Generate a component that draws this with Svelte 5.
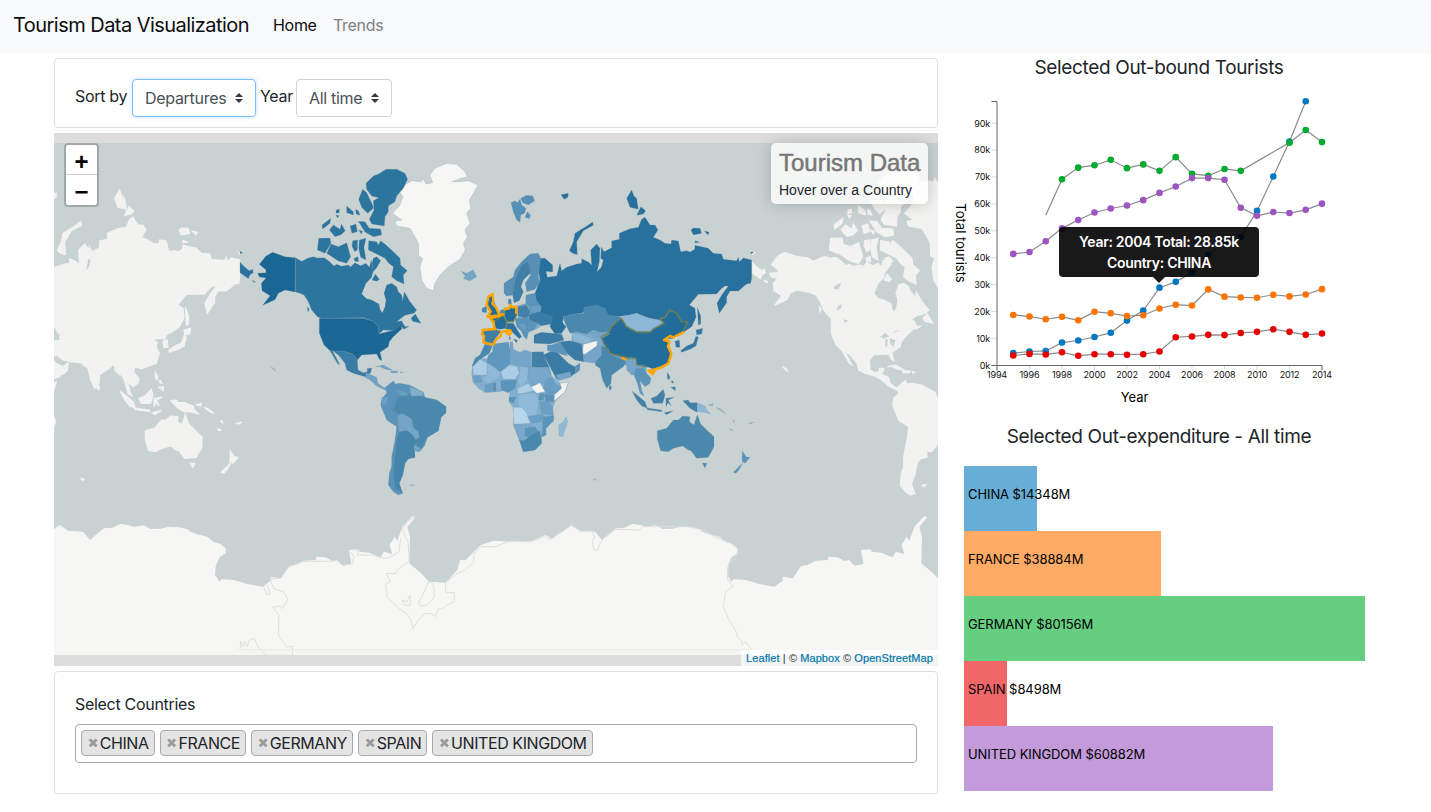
<script>
  const regions = [
    { at: [230, 150], shapes: [
      ['#f6f6f4', 'M600,75 615,55 650,40 680,43 705,65 712,80 690,86 665,95 692,95 715,92 744,105 730,130 718,150 722,175 710,190 720,220 705,240 712,262 700,280 706,300 690,328 655,350 630,375 615,400 610,422 590,415 575,390 570,350 578,325 566,318 565,280 552,255 540,235 500,228 495,214 515,210 488,190 510,165 518,140 505,118 525,105 545,92 575,95 578,85 588,102 608,98Z'],
      ['#1a6795', 'M196,323 165,320 128,307 108,318 88,343 108,360 108,368 83,370 88,381 108,384 94,400 96,422 120,437 98,466 135,449 145,430 165,420 195,426Z'],
      ['#2c739f', 'M30,337 45,352 58,362 68,358 70,368 60,374 55,386 40,375 30,368ZM28,303 38,307 32,312ZM66,390 78,397 70,396Z'],
      ['#2c759f', 'M196,323 215,334 235,324 250,320 262,324 283,323 300,336 312,348 320,343 335,349 355,345 362,350 375,338 392,347 408,340 418,352 424,330 430,362 425,382 408,400 395,432 410,446 425,450 447,462 450,478 457,489 465,470 468,450 462,430 470,405 485,400 500,410 505,425 515,435 518,452 523,425 540,455 560,480 552,490 525,496 500,515 515,512 525,530 538,528 522,538 512,528 495,542 460,540 447,552 445,530 430,514 400,503 275,505 262,500 245,480 235,455 222,435 205,428 196,426Z'],
      ['#2c759f', 'M446,72 468,58 500,58 525,70 533,88 520,115 500,138 495,155 475,168 475,185 465,200 463,228 425,222 418,208 432,180 430,152 446,143 425,138 410,118 408,100 430,78ZM398,118 410,128 428,165 430,175 413,190 395,172 386,148ZM385,214 405,215 418,235 452,237 455,255 430,260 405,246ZM350,168 370,185 370,195 350,188ZM377,178 385,182 390,196 378,192ZM318,180 328,178 328,188 318,190ZM318,195 328,197 322,204ZM276,225 302,205 300,220 278,237ZM298,240 310,225 330,238 334,222 346,242 332,255 315,260ZM360,228 378,222 382,245 366,250ZM386,240 398,244 394,252Z'],
      ['#2c759f', 'M266,265 300,264 303,280 285,310 262,300ZM303,282 325,290 350,278 362,320 350,340 325,333 290,310ZM368,272 383,270 382,300 374,305 366,288ZM388,270 408,265 402,292 408,330 392,322 386,295ZM416,272 440,275 445,285 452,272 468,285 490,305 510,325 512,345 532,362 520,375 522,402 500,392 485,380 490,350 476,340 465,325 440,312 415,300ZM430,325 440,320 452,332 442,350 430,365 426,340ZM426,390 436,372 448,388 440,394ZM372,325 384,320 386,335 374,334ZM543,505 556,492 573,520 548,514ZM232,470 238,478 234,486Z'],
      ['#1b6896', 'M268,505 400,505 430,514 445,530 447,552 460,548 495,540 512,524 516,536 490,560 478,575 475,590 450,607 456,632 448,628 440,612 395,615 382,630 368,612 345,605 300,602 282,585 268,550Z'],
      ['#3a7ca6', 'M308,602 345,605 368,612 382,630 384,660 400,668 412,665 412,655 426,655 422,668 405,680 370,670 350,660 345,640 325,615ZM300,602 308,603 330,645 322,640Z'],
      ['#6fa2c7', 'M408,668 440,682 443,700 460,712 480,713 468,722 440,708 420,690 405,682ZM436,650 460,645 487,660 470,659 450,650ZM483,662 505,664 500,669 482,668ZM512,665 520,667 512,669Z'],
      ['#b5bdbe', 'M122,650 133,656 136,663 128,657Z']
    ] },
    { at: [370, 360], shapes: [
      ['#5a93b9', 'M48,80 70,62 76,72 88,70 118,75 160,97 165,112 200,120 228,140 228,158 213,172 205,212 172,232 165,255 150,274 133,270 135,292 115,296 105,310 98,345 85,375 98,400 85,405 70,395 55,375 58,340 65,320 65,290 75,240 80,200 50,180 32,135 36,115 50,100Z'],
      ['#4a88ae', 'M80,115 100,108 115,100 125,110 150,106 165,115 200,120 228,140 228,158 213,172 205,212 172,232 155,265 133,250 148,235 145,212 130,205 128,180 110,165 85,160 65,150 75,140Z'],
      ['#4585ac', 'M88,215 110,212 130,225 148,238 132,255 135,292 115,296 105,310 98,345 88,370 98,400 75,385 70,340 75,290 80,240Z'],
      ['#74a5c9', 'M82,170 95,160 105,165 125,178 130,203 145,215 148,230 138,240 128,225 110,210 88,215ZM132,255 150,264 146,276 132,272Z'],
      ['#82afd0', 'M118,80 130,84 160,97 160,107 125,108Z'],
      ['#6a9fc5', 'M36,112 55,113 50,130 40,138 35,132ZM80,90 90,105 110,108 115,100Z'],
      ['#b9c3c2', 'M118,376 132,373 128,379Z']
    ] },
    { at: [460, 180], shapes: [
      ['#7ba9ca', 'M340,440 345,410 440,400 500,420 640,460 612,480 605,550 560,560 553,600 520,570 480,545 410,535 372,540 360,495 335,482ZM170,378 235,360 270,420 228,448 205,452 178,440Z'],
      ['#74a5c9', 'M3,274 20,280 40,270 50,290 30,302 10,296 16,288Z'],
      ['#28709d', 'M232,235 255,235 278,255 278,276 258,274 262,292 290,288 300,250 305,272 320,262 350,252 365,250 365,236 385,246 395,255 392,210 410,192 420,205 418,245 411,275 424,262 430,240 422,235 424,200 432,215 455,203 455,183 478,178 478,160 510,146 535,142 545,118 555,112 570,135 585,135 594,150 580,172 600,180 615,190 633,192 635,180 655,183 662,215 680,212 690,216 704,208 705,196 745,205 760,220 785,222 790,238 830,242 835,232 838,245 850,234 875,240 875,295 872,310 860,312 835,333 810,333 800,350 800,368 778,400 771,370 785,345 805,318 795,318 785,325 770,342 715,343 688,375 705,385 708,412 695,440 670,457 660,460 640,420 600,425 560,412 530,400 510,405 485,408 440,412 435,390 410,378 380,388 365,400 345,402 310,410 308,428 318,440 305,460 285,462 270,440 275,415 240,400 232,380 225,340 240,300 235,270Z'],
      ['#28709d', 'M328,212 340,185 345,160 380,138 398,126 400,136 370,152 350,185 352,224 338,220ZM500,55 515,30 522,48 530,55 535,88 510,82ZM530,106 543,80 557,93 550,102ZM693,150 700,144 720,145 725,160 700,165ZM733,153 748,157 744,165ZM706,182 720,187 704,188ZM712,382 722,408 722,432 715,435ZM303,44 325,40 324,52 312,58ZM872,215 882,216 874,221Z'],
      ['#5790b7', 'M153,68 165,62 172,68 180,58 185,75 198,85 194,100 182,105 180,127 170,120 160,95ZM182,55 200,46 218,48 224,62 205,75 188,68ZM202,95 212,106 208,116 195,112Z'],
      ['#5790b7', 'M132,310 160,290 165,270 185,245 210,222 235,220 242,235 235,290 240,305 225,328 200,335 196,310 212,285 205,270 158,345 140,348 132,340Z'],
      ['#3f7ea6', 'M185,255 205,245 212,278 190,300 183,320 190,335 178,362 162,368 158,345 165,300Z'],
      ['#4a88ae', 'M66,385 80,378 80,398 66,396ZM145,358 153,357 155,374 145,372ZM122,390 133,388 132,403 120,400Z'],
      ['#5a94ba', 'M198,345 225,340 229,360 245,382 230,402 205,398 208,378 197,370ZM165,415 205,415 232,430 222,450 206,456 200,478 192,470 183,452 170,440Z'],
      ['#4580a8', 'M172,380 200,375 210,400 200,415 175,408Z'],
      ['#6a9fc5', 'M175,432 195,430 200,448 186,446ZM212,378 240,375 244,392 230,402 208,392Z'],
      ['#3a7ca6', 'M205,405 235,395 278,410 272,432 245,437 232,430 210,420ZM222,465 245,457 305,463 312,480 270,492 222,490Z'],
      ['#2c739f', 'M140,430 160,430 185,470 178,476 150,450 138,446ZM160,478 172,480 170,488ZM148,465 152,476 148,480Z'],
      ['#4a88ae', 'M308,410 345,402 370,400 372,382 410,375 435,385 445,405 483,410 475,425 455,440 440,462 400,450 380,462 350,455 330,460 318,435Z'],
      ['#8db7d6', 'M485,410 510,405 530,400 555,412 600,420 612,430 580,445 570,455 530,455 500,440Z'],
      ['#216c98', 'M483,415 500,440 530,455 570,455 585,445 612,430 600,415 615,412 630,390 650,400 665,425 683,425 670,455 640,475 612,478 628,488 624,500 634,520 625,550 580,567 560,560 545,555 530,555 528,535 500,533 470,528 450,520 430,490 422,470 445,460 455,440Z'],
      ['#216c98', 'M85,350 98,342 100,360 108,380 118,405 82,410 92,395 80,375ZM135,385 165,380 170,405 160,425 140,425 133,405ZM92,415 128,403 140,425 138,445 120,448 105,445 103,425Z'],
      ['#3f7ea6', 'M68,452 105,450 122,455 105,478 100,493 75,492 70,478Z']
    ] },
    { at: [460, 320], shapes: [
      ['#82aed0', 'M38,135 65,115 150,125 215,142 268,142 275,168 300,190 325,187 315,215 285,245 278,265 282,300 258,325 258,345 245,350 245,370 225,390 190,395 178,360 160,315 163,280 158,260 147,245 150,215 135,210 120,215 75,217 55,205 38,185 35,160Z'],
      ['#4a88ae', 'M75,72 97,78 88,100 65,115 45,138 36,138 45,115 60,105Z'],
      ['#5f98bf', 'M100,72 145,66 152,100 150,130 122,155 80,125 85,105 97,95Z'],
      ['#74a5c9', 'M150,66 158,66 160,88 180,97 195,90 215,97 215,142 195,140 150,130Z'],
      ['#4180a8', 'M216,96 250,95 254,112 268,142 216,142Z'],
      ['#abcde6', 'M38,140 60,118 82,130 82,165 40,165ZM122,155 150,135 172,140 178,160 165,178 130,178ZM172,205 205,190 222,212 190,220 172,222Z'],
      ['#8fb9d8', 'M82,128 122,157 118,175 85,190 65,180 82,165ZM180,140 205,142 203,180 185,200 172,188 178,165ZM178,222 225,218 238,240 230,285 200,290 175,262 172,240ZM318,290 323,305 308,350 297,347 296,315 310,305Z'],
      ['#78a8cc', 'M207,143 268,143 272,165 255,190 225,195 210,190 203,175ZM162,315 215,315 195,340 190,362 178,360Z'],
      ['#5a94ba', 'M123,182 170,180 165,205 145,218 123,210ZM240,220 252,223 250,240 235,240ZM252,222 283,225 280,247 258,242ZM98,190 108,188 108,214 100,214ZM250,290 282,287 280,303 258,325 258,345 245,350 248,310ZM195,325 225,320 235,335 215,350 195,350ZM147,232 168,232 160,250 148,245Z'],
      ['#6a9fc5', 'M74,195 97,190 97,216 75,217ZM258,178 275,172 288,195 305,200 290,222 260,222 250,205ZM238,245 262,242 278,262 278,285 245,280ZM205,290 250,283 245,305 215,310ZM38,168 60,168 68,185 45,190Z'],
      ['#b8d6ea', 'M160,262 185,262 200,280 210,310 162,313Z'],
      ['#4a88ae', 'M178,360 190,362 215,345 240,332 245,370 225,390 190,395Z'],
      ['#f2f2f0', 'M213,202 240,188 255,215 230,220ZM300,190 325,187 315,215 283,243 283,225 305,205ZM370,72 412,62 410,80 375,105 368,98ZM640,52 655,42 650,60Z'],
      ['#3a7ca6', 'M250,105 270,95 290,95 325,130 345,140 360,130 358,150 330,172 290,178 275,150 262,125ZM300,65 330,62 365,72 368,100 372,125 345,120 320,100 308,82Z'],
      ['#5a94ba', 'M275,75 300,65 312,85 322,108 290,98 262,92 262,75ZM345,140 360,130 358,152 345,162Z'],
      ['#74a5c9', 'M288,165 330,155 335,170 295,182ZM372,105 410,78 428,85 425,105 408,130 372,125ZM500,120 515,110 525,140 530,165 515,165 500,150ZM392,40 440,35 450,42 425,55 400,50ZM445,98 480,112 478,119 450,108Z'],
      ['#8db7d6', 'M335,40 360,42 395,55 390,68 370,72 340,62Z'],
      ['#4a88ae', 'M425,78 445,85 450,103 485,118 497,110 497,130 490,140 455,165 453,190 440,205 428,180 420,145 405,135 408,125 425,105ZM448,195 455,200 453,210 447,207Z'],
      ['#5a94ba', 'M528,145 550,145 560,160 573,175 570,190 555,200 540,182 545,212 552,228 540,220 532,190 522,165Z'],
      ['#3378a3', 'M645,64 658,60 660,82 648,82ZM662,92 680,78 700,70 708,48 715,52 708,78 690,88 665,97ZM708,30 728,25 725,42 710,45ZM714,0 720,0 718,14Z'],
      ['#4380a8', 'M516,213 535,228 555,245 562,265 545,258 530,240ZM560,264 605,270 605,275 562,269ZM573,235 590,228 610,208 615,225 608,250 580,250ZM618,235 642,232 625,241 634,258 624,248 618,260ZM668,242 685,240 690,248 711,248 711,277 690,265ZM622,157 630,170 628,180 622,175ZM636,180 642,190 634,188ZM632,202 646,200 646,212ZM612,278 640,272 620,284Z'],
      ['#8db7d6', 'M711,248 735,258 740,270 752,282 725,275 711,275ZM745,255 760,250 758,258Z'],
      ['#a9b9be', 'M768,262 780,266 798,280 785,275ZM820,300 824,308 820,306ZM866,310 882,306 872,312ZM808,326 820,331 812,331ZM400,476 408,478 404,482Z'],
      ['#4a88ae', 'M592,332 620,325 640,300 655,300 668,288 690,290 688,305 702,315 712,284 722,312 740,330 762,350 762,380 745,412 710,415 693,392 685,390 668,378 640,385 625,395 602,392 592,358ZM727,429 741,430 735,443Z'],
      ['#5a94ba', 'M847,393 858,410 870,412 855,430 846,424ZM848,428 840,445 828,460 820,457Z']
    ] }
  ];

  const copies = [-512, 512, 0];

  const shelf = [
    [108,120],[125,105],[150,85],[175,83],[200,72],[222,75],[240,80],[270,76],[290,87],[320,86],[345,80],[375,82],[400,88],[412,97],[430,103],[460,110],[480,127],[500,132],[515,145],[515,160],[497,172],[490,185],[485,200],[483,225],[497,245],[503,238],[540,240],[580,252],[625,260],[650,242],[650,230],[680,235],[705,198],[725,195],[750,182],[785,180],[787,170],[815,172],[835,183],[850,180],[865,197],[892,192],[885,150],[915,148],[917,155],[945,158],[980,172],[990,155],[1015,162],[1007,135],[1022,110],[1030,122],[1045,80],[1075,48],[1083,53],[1060,80],[1068,110],[1066,190],[1100,218],[1125,245],[1175,248],[1210,210],[1218,180],[1235,180],[1280,135],[1320,122],[1370,125],[1430,124],[1475,105],[1493,117],[1530,92],[1553,75],[1578,92],[1623,95]
  ];
  const antarctica = 'M' + [-1536, 0, 1536]
    .flatMap((dx) => shelf.map(([x, y]) => `${x + dx},${y}`))
    .join(' ') + ' 3170,465 -1500,465Z';

  const x = (year) => 997 + (year - 1994) * 16.25;
  const y = (k) => 365.2 - k * 2.688;
  const from = (start, list) => list.map((v, i) => [start + i, v]);
  const series = [
    { color: '#0078c1', pts: from(1995, [4.5,5.1,5.3,8.4,9.2,10.5,12.1,16.6,20.3,28.85,31,34.5,41,45.8,47.7,57.4,70.2,83.2,98.2]) },
    { color: '#ff7400', pts: from(1995, [18.7,18.1,17.1,18,16.7,19.9,19.3,18.3,18.6,21.1,22.5,22.2,28.2,25.5,25.2,25.1,26.2,25.6,26.3,28.3]) },
    { color: '#00ab2e', lead: [1997, 55.8], pts: [...from(1998, [69.2,73.5,74.4,76.4,73.3,74.7,72.3,77.4,71.2,70.5,73,72.3]), ...from(2012, [82.8,87.5,83])] },
    { color: '#e80000', pts: from(1995, [3.6,4.2,4,4.8,3.5,4.1,4.1,3.9,4.1,5.1,10.4,10.7,11.3,11.2,12,12.4,13.4,12.4,11.3,11.8]) },
    { color: '#9e54c2', pts: from(1995, [41.4,42.1,46.1,50.9,54,56.8,58.3,59.4,61.4,64.1,66.5,69.6,69.6,69,58.6,55.6,57,56.6,57.8,60.1]) }
  ];
  const line = (s) => (s.lead ? [s.lead, ...s.pts] : s.pts).map(([a, b]) => `${x(a)},${y(b)}`).join(' ');
  const yTicks = [0, 10, 20, 30, 40, 50, 60, 70, 80, 90];
  const xTicks = Array.from({ length: 11 }, (_, i) => 1994 + i * 2);

  const spending = [
    { name: 'CHINA', total: 14348, color: '#66aed6' },
    { name: 'FRANCE', total: 38884, color: '#ffab66' },
    { name: 'GERMANY', total: 80156, color: '#66ce81' },
    { name: 'SPAIN', total: 8498, color: '#f16767' },
    { name: 'UNITED KINGDOM', total: 60882, color: '#c39ada' }
  ];
</script>

<nav>
  <span class="brand">Tourism Data Visualization</span>
  <span class="link active">Home</span>
  <span class="link">Trends</span>
</nav>

<main>
  <section class="left">
    <div class="card filters">
      <span class="lbl sort">Sort by</span>
      <div class="select focus"><span class="dep">Departures</span>
        <svg width="8" height="10" viewBox="0 0 4 5"><path fill="#343a40" d="M2 0 0 2h4zm0 5L0 3h4z" /></svg>
      </div>
      <span class="lbl year">Year</span>
      <div class="select"><span class="all">All time</span>
        <svg width="8" height="10" viewBox="0 0 4 5"><path fill="#343a40" d="M2 0 0 2h4zm0 5L0 3h4z" /></svg>
      </div>
    </div>

    <div class="map">
      <svg class="world" width="884" height="533" viewBox="54 133 884 533">
        <rect x="54" y="133" width="884" height="533" fill="#ddd" />
        <rect x="54" y="143" width="884" height="512" fill="#c9d2d3" />
        <g transform="translate(54 500) scale(.333333)">
          <path d={antarctica} fill="#f6f6f4" />
          <g class="faint">
            <path d="M628,258 638,283 648,282 640,255M650,232 652,250 662,268 688,275 702,298 684,326 676,318 656,322 675,346 673,405 698,440 716,440 715,466 636,466 612,440 600,414 585,422 580,440 572,424 567,440 560,424 558,450" />
            <path d="M652,235 680,235 705,200 750,184 820,184 850,182 865,196 895,192 900,170 890,155M895,148 915,152 910,165 960,165 980,174 1005,174 1035,155 1040,115M1082,50 1060,65 1045,90 1062,125 1066,182 1028,212 1026,220 997,221 1010,245 995,252 999,290 1035,325 1058,340 1070,358 1077,386 1090,364 1112,340 1133,341 1144,350 1152,328 1166,326 1178,316 1200,305 1201,278 1175,278 1175,248 1210,220 1232,212 1260,185 1258,165 1280,140 1325,140 1370,122 1430,126 1470,110 1490,118 1552,76 1580,95 1612,92 1622,108 1615,128 1620,150 1630,150 1644,120 1685,88 1755,90 1765,80 1900,80 1950,90 1985,112 2030,130 2052,148 2045,170 2025,190 2020,235 2038,260 2015,273 2008,320 2025,360 2047,395 2050,410 2062,420 2065,434 2074,424 2094,450" />
            <path d="M1045,300 1058,306 1068,286 1069,316 1052,316ZM1122,248 1132,246 1140,258 1140,294 1118,316 1100,318 1094,306 1104,290Z" />
            <path d="M560,450H2094" stroke-width="5" stroke="#ecebea" />
          </g>
        </g>
        {#each copies as dx}
          {#each regions as r}
            <g transform="translate({r.at[0] + dx} {r.at[1]}) scale(.333333)" class:own={dx === 0}>
              {#each r.shapes as [fill, d]}
                <path {d} fill={dx === 0 ? fill : '#f2f2f0'} stroke={dx === 0 ? undefined : '#f2f2f0'} stroke-width={dx === 0 ? undefined : 3.5} />
              {/each}
            </g>
          {/each}
          {#if dx !== 0}
            <g transform="translate({230 + dx} 150) scale(.333333)" fill="#c9d2d3">
              <path d="M286,470 300,462 295,478 284,480ZM304,508 320,512 308,518ZM414,560 430,548 442,560 425,566ZM430,568 437,568 436,590 430,588ZM442,565 460,570 455,590 445,582ZM275,410 298,396 290,418 276,418Z" />
            </g>
          {/if}
        {/each}
        <g transform="translate(460 180) scale(.333333)" fill="none" stroke-linejoin="round" stroke-linecap="round">
          <path class="inland" d="M612,430 600,415 615,412 630,390 650,400 665,425 683,425 670,455M612,430 580,447 570,457 530,457 500,440 483,415 455,440 445,460 424,470 432,490 450,520 500,533 528,535 530,555 560,560M135,385 133,405 105,422M170,405 160,425 140,425 138,445M128,403 140,425M68,452 105,450 122,455" />
          <path class="coast" d="M670,457 640,472 630,468 612,480 628,484 624,500 634,520 625,550 605,562 580,570 565,572 578,582 584,572M488,535 496,538" />
          <path class="coast" d="M85,350 98,342 100,360 97,370 108,382 118,405 100,408 82,410 92,395 80,375ZM133,388 148,385 150,375 158,382 168,380M170,382 168,398M130,402 118,408 90,415 100,425 104,447 68,450 66,462 72,468 70,486 80,490 100,494 108,478 122,468 124,456 142,452" />
          <circle class="coast" cx="147" cy="457" r="6" />
        </g>
      </svg>
      <div class="zoom"><span>+</span><span>−</span></div>
      <div class="info"><h4>Tourism Data</h4><p>Hover over a Country</p></div>
      <div class="credit"><a href="#leaflet">Leaflet</a> | © <a href="#mapbox">Mapbox</a> © <a href="#osm">OpenStreetMap</a></div>
    </div>

    <div class="card countries">
      <div class="lbl sc">Select Countries</div>
      <div class="tags">
        {#each spending as c}
          <span class="tag"><b>×</b><span>{c.name}</span></span>
        {/each}
      </div>
    </div>
  </section>

  <section class="right">
    <h5>Selected Out-bound Tourists</h5>
    <div class="plot">
      <svg width="400" height="325" viewBox="948 85 400 325">
        {#each yTicks as t}
          <line x1="991" x2="997" y1={y(t)} y2={y(t)} stroke="#ddd" />
          <text class="tick" x="990" y={y(t) + 3.3} text-anchor="end">{t}k</text>
        {/each}
        {#each xTicks as t}
          <line x1={x(t)} x2={x(t)} y1="365" y2="370" stroke="#ddd" />
          <text class="tick" x={x(t)} y="378.3" text-anchor="middle">{t}</text>
        {/each}
        <path d="M991.5,101.5H997V365.5H991.5M997,370.5V365.5H1322V370.5" fill="none" stroke="#666" />
        {#each series as s}
          <polyline points={line(s)} fill="none" stroke="#8a8a8a" stroke-width="1.2" />
          {#each s.pts as p}
            <circle cx={x(p[0])} cy={y(p[1])} r="3.3" fill={s.color} />
          {/each}
        {/each}
        <text class="axis" x="1134.5" y="402" text-anchor="middle">Year</text>
        <text class="axis" transform="translate(956 243) rotate(90)" text-anchor="middle">Total tourists</text>
      </svg>
      <div class="tip"><span>Year: 2004 Total: 28.85k</span><span>Country: CHINA</span></div>
    </div>
    <h5 class="exp">Selected Out-expenditure - All time</h5>
    <div class="bars">
      {#each spending as c}
        <div class="bar" style="width:{c.total / 197.3}px;background:{c.color}">{c.name} ${c.total}M</div>
      {/each}
    </div>
  </section>
</main>

<style>
  :global(body) { margin: 0; background: #fff; color: #212529; font-family: Inter, "Noto Sans", sans-serif; overflow: hidden; }
  nav { height: 53px; box-sizing: border-box; padding: 0 13px 3px; display: flex; align-items: center; background: #f8f9fa; }
  .brand { font-size: 20px; letter-spacing: -0.54px; width: 260px; color: #0d0e0f; white-space: nowrap; }
  .link { font-size: 16px; letter-spacing: -0.3px; color: #808182; width: 60px; }
  .link.active { color: #0d0e0f; }
  main { display: flex; }
  .left { margin: 5px 0 0 54px; width: 884px; }
  .card { border: 1px solid #dfdfdf; border-radius: 4px; box-sizing: border-box; background: #fff; }
  .filters { height: 70px; display: flex; align-items: flex-start; padding: 20px; }
  .lbl { font-size: 16px; letter-spacing: -0.3px; line-height: 24px; white-space: nowrap; }
  .sort { width: 57px; padding-top: 5px; }
  .year { width: 36px; padding: 5px 0 0 4px; }
  .select { height: 38px; box-sizing: border-box; border: 1px solid #ced4da; border-radius: 4px; padding: 0 12px; display: flex; align-items: center; gap: 8px; font-size: 16px; letter-spacing: -0.3px; color: #495057; white-space: nowrap; }
  .dep { width: 82px; }
  .all { width: 54px; }
  .focus { border-color: #80bdff; box-shadow: 0 0 4px rgba(128, 189, 255, .5); }
  .map { position: relative; height: 533px; margin: 5px 0; }
  .world { display: block; }
  .own path { stroke: #6e8d9d; stroke-opacity: .45; stroke-width: 1.5; }
  .faint { fill: none; stroke: #dededd; stroke-width: 3; }
  .coast { stroke: #ffa500; stroke-width: 7.5; }
  .inland { stroke: #727f50; stroke-opacity: .8; stroke-width: 5; }
  .zoom { position: absolute; left: 10px; top: 10px; width: 31px; border: 2px solid rgba(0, 0, 0, .2); background-clip: padding-box; background-color: #fff; border-radius: 4px; display: flex; flex-direction: column; }
  .zoom span { height: 30px; font: bold 24px/34px "Liberation Sans", sans-serif; text-align: center; color: #000; }
  .zoom span:first-child { border-bottom: 1px solid #ccc; height: 29px; }
  .info { position: absolute; right: 10px; top: 10px; width: 157px; height: 61px; box-sizing: border-box; padding: 5px 8px; background: rgba(255, 255, 255, .8); box-shadow: 0 0 15px rgba(0, 0, 0, .2); border-radius: 5px; font-family: "Liberation Sans", sans-serif; }
  .info h4 { margin: 0 0 4px; font-weight: 400; font-size: 24px; line-height: 29px; color: #777; white-space: nowrap; -webkit-text-stroke: .5px #777; }
  .info p { margin: 0; font-size: 14px; line-height: 18px; white-space: nowrap; }
  .credit { position: absolute; right: 0; bottom: 0; padding: 0 5px; background: rgba(255, 255, 255, .7); font: 11px/16px "Liberation Sans", sans-serif; letter-spacing: .08px; color: #333; white-space: nowrap; }
  .credit a { color: #0078a8; text-decoration: none; -webkit-text-stroke: .2px #0078a8; }
  .countries { height: 123px; padding: 20px; }
  .tags { margin-top: 8px; height: 39px; box-sizing: border-box; border: 1px solid #aaa; border-radius: 4px; display: flex; gap: 5px; padding: 5px; }
  .tag { height: 26px; box-sizing: border-box; border: 1px solid #aaa; border-radius: 4px; background: #e4e4e4; padding: 0 5px 0 6px; display: flex; align-items: center; gap: 1.6px; font-size: 16px; letter-spacing: -0.43px; }
  .tag b { color: #999; font-size: 15px; line-height: 20px; -webkit-text-stroke: .7px #999; letter-spacing: 0; }
  .right { width: 400px; margin-left: 10px; }
  h5 { margin: 0; padding: 3px 0 0 22px; text-align: center; font-size: 19px; line-height: 23px; font-weight: 400; letter-spacing: -0.34px; white-space: nowrap; }
  .plot { position: relative; height: 325px; margin: 6px 0 0; }
  .plot svg { display: block; }
  .tick { font: 9px Inter, sans-serif; fill: #111; letter-spacing: -.15px; }
  .axis { font: 13px Inter, sans-serif; fill: #000; }
  .tip { position: absolute; left: 111px; top: 142px; width: 200px; height: 50px; box-sizing: border-box; padding-top: 4px; border-radius: 4px; background: rgba(0, 0, 0, .9); color: #fff; display: flex; flex-direction: column; align-items: center; font-weight: 600; font-size: 14px; line-height: 21px; letter-spacing: -0.3px; white-space: nowrap; }
  .tip::after { content: ""; position: absolute; top: 50px; left: 94px; border: 6px solid transparent; border-top-color: rgba(0, 0, 0, .9); border-bottom: 0; }
  .exp { padding-top: 15px; }
  .bars { margin: 18px 0 0 16px; width: 401px; }
  .bar { max-width: 401px; height: 65px; font-size: 13px; line-height: 57px; text-indent: 4px; letter-spacing: -.08px; color: #000; white-space: nowrap; }
</style>
